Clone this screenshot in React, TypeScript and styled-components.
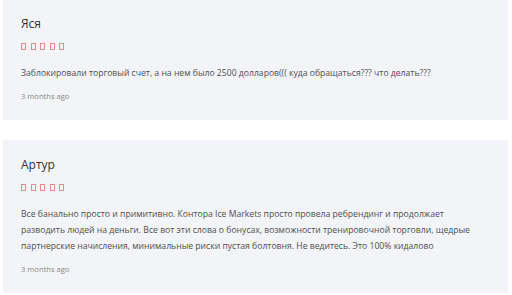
import React from "react";
import styled, { createGlobalStyle } from "styled-components";

const Global = createGlobalStyle`
  html, body { margin: 0; padding: 0; background: #ffffff; }
  body { font-family: "Open Sans", "Liberation Sans", sans-serif; }
`;

const Page = styled.div`
  padding: 0 4px 0 3px;
  margin-top: -1px;
  display: flex;
  flex-direction: column;
  gap: 20px;
`;

const Card = styled.div`
  background: #f3f4f7;
  padding: 16px 18px 17px 18px;
  display: flex;
  flex-direction: column;
`;

const Name = styled.div`
  font-size: 12px;
  line-height: 18px;
  color: #333333;
`;

const Stars = styled.div`
  display: flex;
  gap: 4.5px;
  margin-top: 10px;
  height: 7px;
  align-items: center;
`;

const Star = styled.span`
  width: 3px;
  height: 5px;
  border: 1px solid #e48b8b;
`;

const Text = styled.div`
  margin-top: 15px;
  font-size: 8.65px;
  line-height: 16px;
  color: #4f4f4f;
`;

const Date = styled.div`
  margin-top: 8px;
  font-size: 7.6px;
  line-height: 14px;
  color: #888888;
`;

const reviews = [
  {
    name: "Яся",
    text: "Заблокировали торговый счет, а на нем было 2500 долларов((( куда обращаться??? что делать???",
  },
  {
    name: "Артур",
    text: "Все банально просто и примитивно. Контора Ice Markets просто провела ребрендинг и продолжает разводить людей на деньги. Все вот эти слова о бонусах, возможности тренировочной торговли, щедрые партнерские начисления, минимальные риски пустая болтовня. Не ведитесь. Это 100% кидалово",
  },
];

export default function App() {
  return (
    <>
      <Global />
      <Page>
        {reviews.map((r) => (
          <Card key={r.name}>
            <Name>{r.name}</Name>
            <Stars>
              {[0, 1, 2, 3, 4].map((i) => (
                <Star key={i} />
              ))}
            </Stars>
            <Text>{r.text}</Text>
            <Date>3 months ago</Date>
          </Card>
        ))}
      </Page>
    </>
  );
}
